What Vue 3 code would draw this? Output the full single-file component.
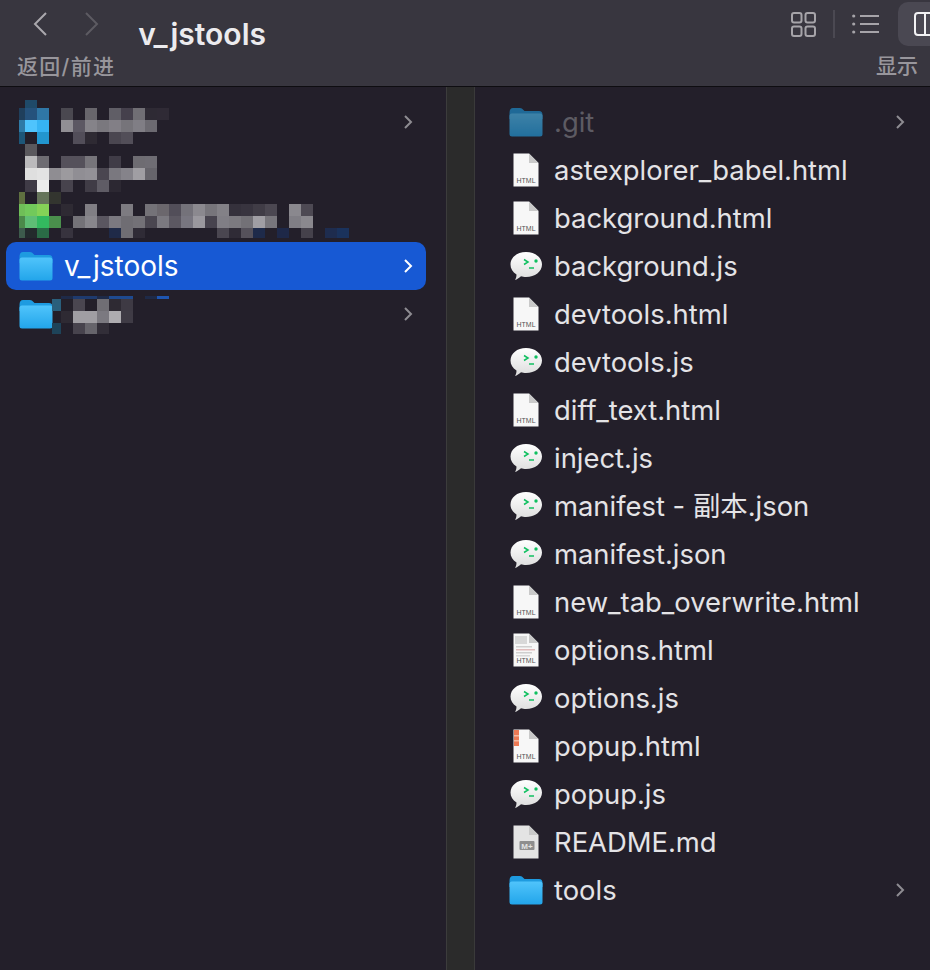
<template>
  <div class="window">
    <header class="toolbar">
      <div class="left-group">
        <div class="nav">
          <div class="nav-arrows">
            <svg class="arrow" width="16" height="26" viewBox="0 0 16 26"><path d="M14 2 L3 13 L14 24" stroke="#aaa8ad" /></svg>
            <svg class="arrow" width="16" height="26" viewBox="0 0 16 26"><path d="M2 2 L13 13 L2 24" stroke="#5d5b62" /></svg>
          </div>
          <span class="tool-label nav-label">返回/前进</span>
        </div>
        <h1 class="title">v_jstools</h1>
      </div>
      <div class="right-group">
        <div class="view-icons">
          <svg width="25" height="25" viewBox="0 0 25 25" class="grid-icon">
            <rect x="1" y="1" width="9.5" height="9.5" rx="2" />
            <rect x="14.5" y="1" width="9.5" height="9.5" rx="2" />
            <rect x="1" y="14.5" width="9.5" height="9.5" rx="2" />
            <rect x="14.5" y="14.5" width="9.5" height="9.5" rx="2" />
          </svg>
          <span class="sep"></span>
          <svg width="27" height="20" viewBox="0 0 27 20" class="list-icon">
            <circle cx="1.7" cy="2" r="1.6" />
            <circle cx="1.7" cy="10" r="1.6" />
            <circle cx="1.7" cy="18" r="1.6" />
            <path d="M8 2 H27 M8 10 H27 M8 18 H27" />
          </svg>
          <div class="active-view">
            <svg width="32" height="24" viewBox="0 0 32 24"><rect x="1" y="1" width="30" height="22" rx="3" /><path d="M11 1 V23" /></svg>
          </div>
        </div>
        <span class="tool-label show-label">显示</span>
      </div>
    </header>

    <main class="columns">
      <section class="sidebar">
        <div
          v-for="(row, i) in sideRows"
          :key="i"
          class="side-row"
          :class="{ selected: row.selected }"
        >
          <svg v-if="row.folder" class="folder" width="34" height="30" viewBox="0 0 34 30">
            <defs>
              <linearGradient id="fold-a" x1="0" y1="0" x2="0" y2="1">
                <stop offset="0" stop-color="#50c4fb" />
                <stop offset="1" stop-color="#22a5ea" />
              </linearGradient>
            </defs>
            <path d="M0.5 6 Q0.5 1 4 1 H11 Q13 1 14.5 3 L15.5 4 H30 Q33.5 4 33.5 8 V12 H0.5 Z" fill="#1e9be0" />
            <rect x="0.5" y="6.5" width="33" height="23" rx="2.5" fill="url(#fold-a)" />
          </svg>
          <span v-if="row.name" class="side-name">{{ row.name }}</span>
          <svg v-if="row.chevron" class="chevron" width="10" height="16" viewBox="0 0 10 16">
            <path d="M2 2 L8 8 L2 14" />
          </svg>
        </div>
        <i
          v-for="(c, i) in mosaicCells"
          :key="'m' + i"
          class="cell"
          :style="{ left: c.x + 'px', top: c.y + 'px', width: c.w + 'px', height: c.h + 'px', background: c.color }"
        ></i>
      </section>

      <div class="divider"></div>

      <section class="files">
        <div v-for="file in files" :key="file.name" class="file-row" :class="{ dim: file.name === '.git' }">
          <span class="icon-slot">
            <svg v-if="file.kind === 'folder'" class="folder" width="34" height="30" viewBox="0 0 34 30">
              <defs>
                <linearGradient id="fold-b" x1="0" y1="0" x2="0" y2="1">
                  <stop offset="0" stop-color="#50c4fb" />
                  <stop offset="1" stop-color="#22a5ea" />
                </linearGradient>
              </defs>
              <path d="M0.5 6 Q0.5 1 4 1 H11 Q13 1 14.5 3 L15.5 4 H30 Q33.5 4 33.5 8 V12 H0.5 Z" fill="#1e9be0" />
              <rect x="0.5" y="6.5" width="33" height="23" rx="2.5" fill="url(#fold-b)" />
            </svg>

            <svg v-else-if="file.kind === 'js'" width="32" height="30" viewBox="0 0 32 30">
              <defs>
                <linearGradient id="bub" x1="0" y1="0" x2="0" y2="1">
                  <stop offset="0" stop-color="#ffffff" />
                  <stop offset="1" stop-color="#dcdcdc" />
                </linearGradient>
              </defs>
              <path d="M16 1 C25 1 32 6.5 32 13.5 C32 20.500 25 26 16 26 C14 26 12.500 25.800 11 25.300 C9 27 7 28.500 5 29 C6 27.500 6.500 25.500 6.500 23.500 C2.500 21 0.500 17.500 0.500 13.500 C0.500 6.500 7 1 16 1 Z" fill="url(#bub)" />
              <path d="M14 8.500 L18 11 L14 13.500" class="prompt" />
              <path d="M19 17 H24" class="prompt" />
              <circle cx="26" cy="10" r="1.700" fill="#10c060" />
            </svg>

            <svg v-else width="26" height="34" viewBox="0 0 26 34" class="file-icon">
              <path d="M0.500 0.500 H16 L25.500 10 V33.500 H0.500 Z" :fill="file.kind === 'md' ? '#e4e4e4' : '#f7f7f7'" />
              <path d="M16 0.500 V10 H25.500 Z" fill="#c9c9c9" />
              <g v-if="file.kind === 'thumb'">
                <rect x="2" y="3" width="12" height="8" fill="#d8d8d8" />
                <rect x="3" y="13" width="16" height="1.500" fill="#cfcfcf" />
                <rect x="3" y="16" width="19" height="1.500" fill="#e0bcbc" />
                <rect x="3" y="19" width="16" height="1.500" fill="#cfcfcf" />
                <rect x="3" y="22" width="14" height="1.500" fill="#d8d8d8" />
              </g>
              <g v-if="file.kind === 'popup'">
                <rect x="1" y="1" width="5" height="16" fill="#ee7a55" />
                <rect x="1" y="6" width="5" height="1.500" fill="#f7b9a0" />
                <rect x="1" y="11" width="5" height="1.500" fill="#f7b9a0" />
              </g>
              <g v-if="file.kind === 'md'">
                <rect x="6.500" y="16" width="15" height="9" rx="1" fill="#8e8e8e" />
                <text x="14" y="23.500" text-anchor="middle" class="md-mark">M+</text>
              </g>
              <text v-else x="13" y="30" text-anchor="middle" class="html-mark">HTML</text>
            </svg>
          </span>
          <span class="file-name">{{ file.name }}</span>
          <svg v-if="file.kind === 'folder'" class="chevron" width="10" height="16" viewBox="0 0 10 16">
            <path d="M2 2 L8 8 L2 14" />
          </svg>
        </div>
      </section>
    </main>
  </div>
</template>

<script setup>
const sideRows = [
  { chevron: true },
  {},
  {},
  { folder: true, name: 'v_jstools', chevron: true, selected: true },
  { folder: true, chevron: true },
]

const files = [
  { name: '.git', kind: 'folder' },
  { name: 'astexplorer_babel.html', kind: 'html' },
  { name: 'background.html', kind: 'html' },
  { name: 'background.js', kind: 'js' },
  { name: 'devtools.html', kind: 'html' },
  { name: 'devtools.js', kind: 'js' },
  { name: 'diff_text.html', kind: 'html' },
  { name: 'inject.js', kind: 'js' },
  { name: 'manifest - 副本.json', kind: 'js' },
  { name: 'manifest.json', kind: 'js' },
  { name: 'new_tab_overwrite.html', kind: 'html' },
  { name: 'options.html', kind: 'thumb' },
  { name: 'options.js', kind: 'js' },
  { name: 'popup.html', kind: 'popup' },
  { name: 'popup.js', kind: 'js' },
  { name: 'README.md', kind: 'md' },
  { name: 'tools', kind: 'folder' },
]

// blurred-out rows: [top, height, { column: colour }], column -1 is the narrow left one
const topBlur = [
  [100, 8, { 0: '#1f4a69' }],
  [108, 12, { '-1': '#1f3f5c', 0: '#25527c', 1: '#2f77a6', 3: '#4a4850', 5: '#68666c', 7: '#605e66', 8: '#45404c', 9: '#706e74', 10: '#2e2a34', 11: '#2f2a35' }],
  [120, 12, { '-1': '#2f7aa6', 0: '#4fc4fd', 1: '#36b4f4', 3: '#918f94', 4: '#5c5863', 5: '#858389', 6: '#7a787e', 7: '#827f86', 8: '#76747a', 9: '#807e85', 10: '#6c6a71' }],
  [132, 12, { '-1': '#1d5678', 1: '#2296cf', 4: '#524e59', 5: '#2e2a33', 7: '#4a4650', 8: '#524e58' }],
  [144, 12, { 0: '#5a585d' }],
  [156, 12, { 0: '#bbbabc', 1: '#6e6c72', 3: '#55515b', 4: '#55515b', 5: '#77757b', 7: '#403c47', 9: '#6e6c72', 10: '#6f6d74' }],
  [168, 12, { 0: '#dfdfdf', 1: '#e3e3e3', 2: '#8f8d92', 3: '#9c9a9e', 4: '#908e94', 5: '#939197', 6: '#4a4650', 7: '#7a787f', 8: '#85838a', 9: '#a09ea3', 10: '#66646b' }],
  [180, 12, { 0: '#3f3b46', 1: '#ececec', 3: '#47434d', 5: '#403c46', 6: '#5f5c65', 7: '#2c2832' }],
  [192, 12, { '-1': '#5f7040', 1: '#65745a', 2: '#33352f' }],
  [204, 12, { '-1': '#6fbe58', 0: '#72c95b', 1: '#85d257', 3: '#2e2a33', 5: '#807e84', 8: '#7d7b81', 10: '#747278', 11: '#6b676d', 12: '#524e59', 13: '#74727a', 14: '#8b898f', 15: '#77757b', 16: '#838187', 17: '#35313c', 18: '#38343f', 19: '#403c46', 20: '#4b4751', 22: '#8a888e', 23: '#4d4953' }],
  [216, 12, { '-1': '#4b8a4a', 0: '#5fbd75', 1: '#33b95f', 2: '#4a8f4c', 4: '#747278', 5: '#88868c', 6: '#5a5660', 7: '#7b7980', 8: '#6f6d73', 9: '#737177', 10: '#4a4650', 11: '#7b7980', 12: '#5c5862', 13: '#787680', 14: '#9a989e', 15: '#47434e', 16: '#807e85', 17: '#7c7a80', 18: '#737177', 19: '#a09ea4', 20: '#78767c', 22: '#807e85', 23: '#8a888e' }],
  [228, 10, { '-1': '#3d5a4c', 0: '#232a2c', 1: '#2a6b46', 3: '#37333e', 7: '#1f2a48', 8: '#6f6d73', 9: '#2f2b36', 16: '#4a4650', 17: '#2f2b36', 18: '#55515b', 19: '#1e2a4a', 21: '#1e2848', 23: '#45414b', 25: '#1e2c4e', 26: '#1a325c' }],
]

const bottomBlur = [
  [296, 3, { 0: '#1e2a48', 1: '#1e3a6e', 2: '#1e3a6e', 3: '#1e2a48', 4: '#1e4a90', 5: '#1e4a90', 7: '#1e2a48', 8: '#1e55b0' }],
  [299, 12, { '-1': '#2a5f7c', 0: '#231f29', 1: '#4a4650', 2: '#231f29', 3: '#706e74', 4: '#2e2a33', 5: '#3e3a44' }],
  [311, 12, { 0: '#2e2a33', 1: '#a09ea3', 2: '#a09ea3', 3: '#7b7980', 4: '#aeacb0', 5: '#3f3b45' }],
  [323, 11, { '-1': '#1e4359', 1: '#47434d', 2: '#66646b', 3: '#322e38' }],
]

function toCells(rows, baseX, edgeW) {
  const out = []
  for (const [y, h, cols] of rows) {
    for (const key of Object.keys(cols)) {
      const col = Number(key)
      out.push({
        x: col < 0 ? baseX - edgeW : baseX + col * 12,
        y: y - 87,
        w: col < 0 ? edgeW : 12,
        h,
        color: cols[key],
      })
    }
  }
  return out
}

const mosaicCells = [...toCells(topBlur, 25, 6), ...toCells(bottomBlur, 61, 9)]
</script>

<style>
html, body {
  margin: 0;
  background: #231f2a;
}
</style>

<style scoped>
.window {
  width: 930px;
  height: 970px;
  overflow: hidden;
  display: flex;
  flex-direction: column;
  background: #231f2a;
  font-family: Inter, "Noto Sans CJK SC", sans-serif;
}

.toolbar {
  height: 86px;
  flex: none;
  display: flex;
  justify-content: space-between;
  background: #38363f;
  border-bottom: 1px solid #0e0d11;
}

.left-group {
  display: flex;
  align-items: flex-start;
}

.nav {
  display: flex;
  flex-direction: column;
  padding: 11px 0 0 17px;
}

.nav-arrows {
  display: flex;
  gap: 36px;
  padding-left: 15px;
  height: 42px;
}

.arrow path {
  fill: none;
  stroke-width: 2;
}

.tool-label {
  font-size: 21px;
  line-height: 28px;
  font-weight: 500;
  color: #98969c;
  white-space: nowrap;
}

.nav-label {
  letter-spacing: 1.3px;
}

.title {
  margin: 16px 0 0 23px;
  font-size: 30px;
  line-height: 36px;
  font-weight: 600;
  color: #ecebee;
}

.right-group {
  display: flex;
  flex-direction: column;
  align-items: flex-end;
}

.view-icons {
  display: flex;
  align-items: flex-start;
  height: 52px;
  padding-top: 2px;
  box-sizing: border-box;
}

.grid-icon {
  margin-top: 10px;
}

.grid-icon rect {
  fill: none;
  stroke: #a6a4a9;
  stroke-width: 2;
}

.sep {
  width: 2px;
  height: 28px;
  margin: 8px 17px 0 17px;
  background: #4b4952;
}

.list-icon {
  margin-top: 12px;
}

.list-icon circle {
  fill: #a6a4a9;
}

.list-icon path {
  stroke: #a6a4a9;
  stroke-width: 2;
}

.active-view {
  width: 32px;
  height: 44px;
  margin-left: 19px;
  padding: 10px 0 0 16px;
  box-sizing: border-box;
  overflow: hidden;
  border-radius: 10px 0 0 10px;
  background: #4a4852;
}

.active-view rect,
.active-view path {
  fill: none;
  stroke: #f2f2f4;
  stroke-width: 2;
}

.show-label {
  margin-right: 12px;
}

.columns {
  flex: 1;
  display: flex;
  min-height: 0;
}

.sidebar {
  position: relative;
  width: 446px;
  flex: none;
  box-sizing: border-box;
  padding: 11px 20px 0 6px;
}

.side-row {
  height: 48px;
  display: flex;
  align-items: center;
  padding: 0 13px;
  border-radius: 10px;
}

.side-row.selected {
  background: #1759d4;
}

.side-name {
  margin-left: 11px;
  font-size: 28px;
  color: #ffffff;
}

.side-row .chevron {
  margin-left: auto;
}

.chevron path {
  fill: none;
  stroke: #8e8c92;
  stroke-width: 2;
}

.side-row.selected .chevron path {
  stroke: #ffffff;
}

.cell {
  position: absolute;
}

.divider {
  width: 29px;
  flex: none;
  background: #2b2b2b;
  border-left: 1px solid #3c3c3c;
  border-right: 1px solid #3a3a3a;
  box-sizing: border-box;
}

.files {
  flex: 1;
  padding: 11px 25px 0 34px;
}

.file-row {
  height: 48px;
  display: flex;
  align-items: center;
  gap: 11px;
}

.icon-slot {
  width: 34px;
  height: 48px;
  flex: none;
  display: flex;
  align-items: center;
  justify-content: center;
}

.file-name {
  font-size: 27.400px;
  line-height: 48px;
  height: 48px;
  color: #e4e3e6;
  white-space: nowrap;
}

.file-row .chevron {
  margin-left: auto;
}

.file-row.dim .file-name {
  color: #5d5b63;
}

.file-row.dim .folder {
  opacity: 0.6;
}

.prompt {
  fill: none;
  stroke: #10c060;
  stroke-width: 1.500;
}

.html-mark {
  font-family: "Liberation Sans", sans-serif;
  font-size: 7px;
  font-weight: 400;
  fill: #555555;
}

.md-mark {
  font-family: "Liberation Sans", sans-serif;
  font-size: 8px;
  font-weight: 700;
  fill: #e4e4e4;
}
</style>
